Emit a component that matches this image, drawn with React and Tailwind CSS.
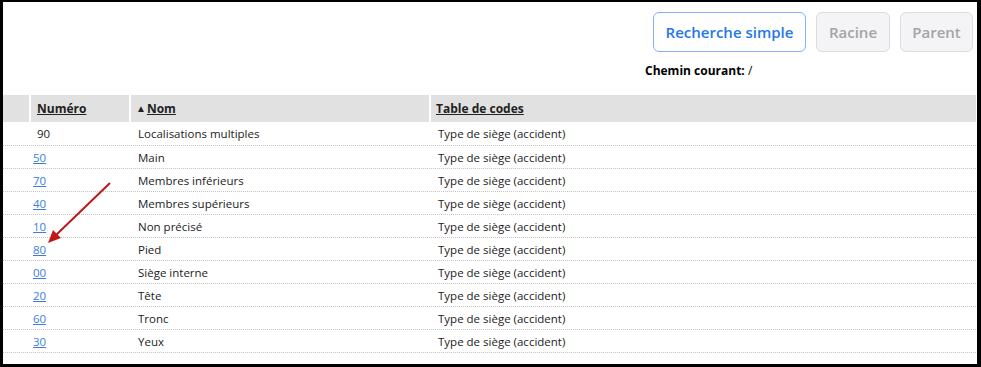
import React from "react";

const rows = [
  { code: "90", nom: "Localisations multiples", link: false },
  { code: "50", nom: "Main", link: true },
  { code: "70", nom: "Membres inférieurs", link: true },
  { code: "40", nom: "Membres supérieurs", link: true },
  { code: "10", nom: "Non précisé", link: true },
  { code: "80", nom: "Pied", link: true },
  { code: "00", nom: "Siège interne", link: true },
  { code: "20", nom: "Tête", link: true },
  { code: "60", nom: "Tronc", link: true },
  { code: "30", nom: "Yeux", link: true },
];

export default function App() {
  return (
    <div
      className="w-[981px] h-[367px] bg-black pl-[3px] pt-[2px] pr-[4px] pb-[3px]"
      style={{ fontFamily: '"Open Sans", "Noto Sans", sans-serif' }}
    >
      <div className="relative w-full h-full bg-white overflow-hidden">
        <div className="flex justify-end pt-[10px] pr-[4px]">
          <div className="flex flex-col w-[328px]">
            <div className="flex justify-end gap-[10px]">
              <button className="h-[40px] w-[153px] rounded-[6px] border border-[#7eb3f4] bg-white text-[#1f78ea] text-[15px] font-semibold">
                Recherche simple
              </button>
              <button className="h-[40px] w-[74px] rounded-[6px] border border-[#dcdcdf] bg-[#f4f4f6] text-[#a3a3a8] text-[15px] font-semibold">
                Racine
              </button>
              <button className="h-[40px] w-[73px] rounded-[6px] border border-[#dcdcdf] bg-[#f4f4f6] text-[#a3a3a8] text-[15px] font-semibold">
                Parent
              </button>
            </div>
            <div className="mt-[10px] text-[12px] text-black leading-[18px]">
              <span className="font-bold">Chemin courant:</span> /
            </div>
          </div>
        </div>

        <div className="mt-[15px] w-[973px]">
          <div className="flex h-[27px] bg-[#e1e1e1] text-[12px] font-bold text-[#222] items-center">
            <div className="w-[28px] h-full border-r-2 border-white"></div>
            <div className="w-[100px] h-full border-r-2 border-white flex items-center pl-[6px]">
              <span className="underline">Numéro</span>
            </div>
            <div className="w-[300px] h-full border-r-2 border-white flex items-center pl-[5px]">
              <span className="text-[10px] mr-[1px]">▲</span>
              <span className="underline">Nom</span>
            </div>
            <div className="flex-1 h-full flex items-center pl-[5px]">
              <span className="underline">Table de codes</span>
            </div>
          </div>
          {rows.map((r, i) => (
            <div
              key={r.code}
              className={`flex text-[11.5px] text-[#222] items-center pt-[1px] border-b border-dotted border-[#c4c4c4] ${
                i === 0 ? "h-[24px]" : "h-[23px]"
              }`}
            >
              <div className="w-[130px] shrink-0">
                {r.link ? (
                  <a href="#" className="ml-[30px] text-[#3b7ee0] underline">
                    {r.code}
                  </a>
                ) : (
                  <span className="ml-[34px]">{r.code}</span>
                )}
              </div>
              <div className="w-[300px] shrink-0 pl-[5px]">{r.nom}</div>
              <div className="flex-1 pl-[5px]">Type de siège (accident)</div>
            </div>
          ))}
        </div>

        <svg
          className="absolute left-0 top-0 pointer-events-none"
          width="974"
          height="362"
        >
          <line x1="107" y1="181" x2="52" y2="234" stroke="#c01818" strokeWidth="2" />
          <polygon points="45,241 50,228 58,236" fill="#c01818" />
        </svg>
      </div>
    </div>
  );
}
